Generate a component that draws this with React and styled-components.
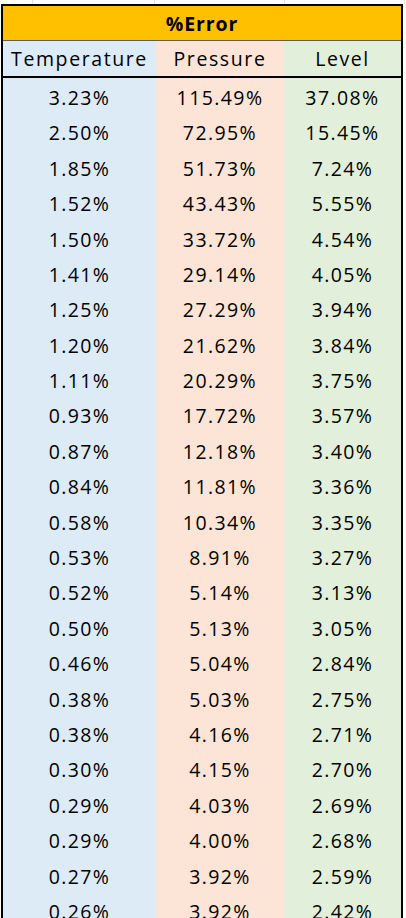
import React from 'react'
import styled, { createGlobalStyle } from 'styled-components'

const GlobalStyle = createGlobalStyle`
  html, body {
    margin: 0;
    padding: 0;
    background: #fff;
  }
  body {
    height: 918px;
    overflow: hidden;
    font-family: 'Open Sans', 'Liberation Sans', sans-serif;
  }
`

const temperature = ['3.23', '2.50', '1.85', '1.52', '1.50', '1.41', '1.25', '1.20', '1.11', '0.93', '0.87', '0.84',
  '0.58', '0.53', '0.52', '0.50', '0.46', '0.38', '0.38', '0.30', '0.29', '0.29', '0.27', '0.26']
const pressure = ['115.49', '72.95', '51.73', '43.43', '33.72', '29.14', '27.29', '21.62', '20.29', '17.72', '12.18', '11.81',
  '10.34', '8.91', '5.14', '5.13', '5.04', '5.03', '4.16', '4.15', '4.03', '4.00', '3.92', '3.92']
const level = ['37.08', '15.45', '7.24', '5.55', '4.54', '4.05', '3.94', '3.84', '3.75', '3.57', '3.40', '3.36',
  '3.35', '3.27', '3.13', '3.05', '2.84', '2.75', '2.71', '2.70', '2.69', '2.68', '2.59', '2.42']

const colors = ['#ddebf7', '#fce4d6', '#e2efda']

const Sheet = styled.main`
  display: flex;
  flex-direction: column;
`

const GridStrip = styled.div`
  display: grid;
  grid-template-columns: 33px 122px 130px 120px 1px;
  height: 4px;
`

const GridCell = styled.div`
  border-right: 1px solid #e1e1e1;
`

const Table = styled.div`
  margin-left: 1px;
  width: 398px;
  border: 2px solid #000;
  border-bottom: none;
`

const Title = styled.div`
  height: 34px;
  background: #ffc000;
  border-bottom: 1px solid #5e5e5e;
  display: flex;
  align-items: center;
  justify-content: center;
  font-weight: 700;
  font-size: 19.5px;
  letter-spacing: 0.9px;
  color: #000;
`

const Row = styled.div`
  display: grid;
  grid-template-columns: 153px 128px 117px;
  height: ${p => p.$h}px;
  border-bottom: ${p => (p.$head ? '2px solid #000' : 'none')};
`

const Cell = styled.div`
  background: ${p => p.$bg};
  display: flex;
  align-items: center;
  justify-content: center;
  padding-top: ${p => (p.$head ? 0 : 4)}px;
  box-sizing: border-box;
  font-size: 19.5px;
  font-weight: 500;
  line-height: 1;
  letter-spacing: ${p => (p.$head ? 1.6 : 1.4)}px;
  color: #000;
  white-space: nowrap;
`

const App = () => {
  return (
    <Sheet>
      <GlobalStyle />
      <GridStrip>
        <GridCell />
        <GridCell />
        <GridCell />
        <GridCell />
      </GridStrip>
      <Table>
        <Title>%Error</Title>
        <Row $h={35} $head>
          <Cell $bg={colors[0]} $head>Temperature</Cell>
          <Cell $bg={colors[1]} $head>Pressure</Cell>
          <Cell $bg={colors[2]} $head>Level</Cell>
        </Row>
        {temperature.map((t, i) => (
          <Row key={i} $h={35.4}>
            <Cell $bg={colors[0]}>{t}%</Cell>
            <Cell $bg={colors[1]}>{pressure[i]}%</Cell>
            <Cell $bg={colors[2]}>{level[i]}%</Cell>
          </Row>
        ))}
      </Table>
    </Sheet>
  )
}

export default App
